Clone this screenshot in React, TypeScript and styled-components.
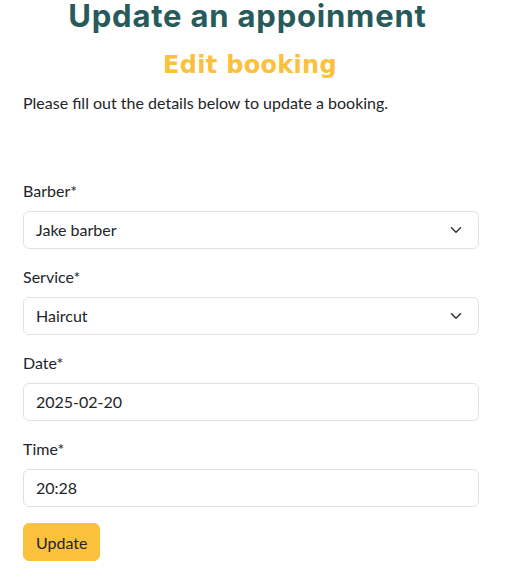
import React from "react";
import styled, { createGlobalStyle } from "styled-components";

const Global = createGlobalStyle`
  * { box-sizing: border-box; }
  body {
    margin: 0;
    background: #ffffff;
    font-family: Lato, "Liberation Sans", sans-serif;
    font-size: 16px;
    line-height: 1.5;
    color: #212529;
  }
`;

const Page = styled.main`
  padding: 0 50px 0 23px;
  width: 529px;
`;

const Title = styled.h1`
  margin: 0;
  padding-right: 7px;
  text-align: center;
  font-family: Inter, "DejaVu Sans", sans-serif;
  font-weight: 700;
  font-size: 31px;
  line-height: 32px;
  letter-spacing: 0.8px;
  color: #275b5b;
`;

const Subtitle = styled.h2`
  margin: 18px 0 0;
  padding-right: 2px;
  text-align: center;
  font-family: "DejaVu Sans", Inter, sans-serif;
  font-weight: 700;
  font-size: 24px;
  line-height: 30px;
  letter-spacing: 0.3px;
  color: #fbc13c;
`;

const Intro = styled.p`
  margin: 11px 0 64px;
  font-size: 16px;
  line-height: 24px;
`;

const Form = styled.form`
  display: flex;
  flex-direction: column;
`;

const Field = styled.div`
  margin-bottom: 16px;
`;

const Label = styled.label`
  display: block;
  margin-bottom: 8px;
  font-size: 16px;
  line-height: 24px;
`;

const Control = styled.div`
  display: flex;
  align-items: center;
  justify-content: space-between;
  height: 38px;
  padding: 0 16px 0 12px;
  border: 1px solid #dee2e6;
  border-radius: 6px;
  background: #fff;
  font-size: 16px;
`;

const Button = styled.button`
  align-self: flex-start;
  height: 38px;
  padding: 0 12px;
  border: 1px solid #fbc13c;
  border-radius: 6px;
  background: #fbc13c;
  color: #212529;
  font-family: Lato, "Liberation Sans", sans-serif;
  font-size: 16px;
`;

const Chevron = () => (
  <svg width="12" height="8" viewBox="0 0 12 8" fill="none">
    <path d="M1.5 1.8 6 6.2 10.5 1.8" stroke="#343a40" strokeWidth="1.6" strokeLinecap="round" strokeLinejoin="round" />
  </svg>
);

const fields = [
  { label: "Barber*", value: "Jake barber", select: true },
  { label: "Service*", value: "Haircut", select: true },
  { label: "Date*", value: "2025-02-20", select: false },
  { label: "Time*", value: "20:28", select: false },
];

export default function App() {
  return (
    <>
      <Global />
      <Page>
        <Title>Update an appoinment</Title>
        <Subtitle>Edit booking</Subtitle>
        <Intro>Please fill out the details below to update a booking.</Intro>
        <Form onSubmit={(e) => e.preventDefault()}>
          {fields.map((f) => (
            <Field key={f.label}>
              <Label>{f.label}</Label>
              <Control>
                <span>{f.value}</span>
                {f.select && <Chevron />}
              </Control>
            </Field>
          ))}
          <Button type="submit">Update</Button>
        </Form>
      </Page>
    </>
  );
}
